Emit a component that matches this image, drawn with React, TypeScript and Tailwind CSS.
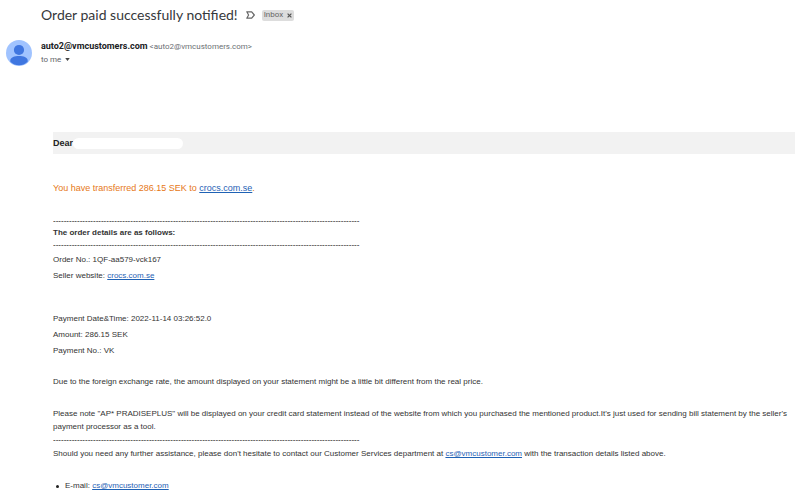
import type { ReactNode } from "react";

const DASHES = "-".repeat(115);

const PAYMENT_LINES = [
  "Payment Date&Time: 2022-11-14 03:26:52.0",
  "Amount: 286.15 SEK",
  "Payment No.: VK",
];

function MailLink({ href, children }: { href: string; children: ReactNode }) {
  return (
    <a href={href} className="text-[#1f62b5] underline">
      {children}
    </a>
  );
}

function Divider() {
  return <p className="overflow-hidden whitespace-nowrap leading-3 text-black">{DASHES}</p>;
}

function Avatar() {
  return (
    <svg viewBox="0 0 24 24" className="size-[26px] shrink-0" aria-hidden="true">
      <circle cx="12" cy="12" r="12" fill="#a0c3ff" />
      <circle cx="12" cy="9.2" r="4.7" fill="#3f76e0" />
      <path d="M4 18.9c0-2.9 4-4.1 8-4.1s8 1.2 8 4.1v1.1a11.300 11.300 0 0 1-16 0z" fill="#3f76e0" />
    </svg>
  );
}

function MessageHeader() {
  return (
    <header className="flex gap-[9px] px-[6px] pt-[15px]">
      <Avatar />
      <div>
        <p className="flex items-baseline gap-[2px] leading-[13px]">
          <span className="font-['Roboto',sans-serif] text-[9px] font-bold text-[#202124]">
            auto2@vmcustomers.com
          </span>
          <span className="font-['Roboto',sans-serif] text-[8px] text-[#6b6f74]">
            &lt;auto2@vmcustomers.com&gt;
          </span>
        </p>
        <button
          type="button"
          className="flex items-center gap-1 font-['Roboto',sans-serif] text-[8px] leading-[13px] text-[#5f6368]"
        >
          to me
          <svg viewBox="0 0 6 4" className="h-[3px] w-[5px]" aria-hidden="true">
            <path d="M0 0h6L3 4z" fill="#444" />
          </svg>
        </button>
      </div>
    </header>
  );
}

export default function App() {
  return (
    <main className="min-h-screen bg-white font-['Liberation_Sans',Arial,sans-serif] text-[8px] leading-4 text-[#333]">
      {/* Subject */}
      <div className="flex items-center pt-[5px] pl-[41px]">
        <h1 className="font-['Lato',sans-serif] text-[14px] leading-5 text-[#36383b]">
          Order paid successfully notified!
        </h1>
        <button type="button" aria-label="Mark as important" className="ml-2">
          <svg viewBox="0 0 9 8" className="h-2 w-[9px]" fill="none" stroke="#666" strokeWidth="1.2">
            <path d="M.8.8h4.900L8.300 4 5.700 7.200H.8L2.600 4z" strokeLinejoin="round" />
          </svg>
        </button>
        <span className="ml-[7px] flex h-[11px] items-center gap-1 rounded-[2px] bg-[#dddddd] px-[2px] font-['Roboto',sans-serif] text-[#666]">
          Inbox
          <button type="button" aria-label="Remove label Inbox">
            <svg viewBox="0 0 5 5" className="block size-[5px]" stroke="#555" strokeWidth="1.2">
              <path d="M.6.6l3.8 3.8M4.4.6L.6 4.4" />
            </svg>
          </button>
        </span>
      </div>

      <MessageHeader />

      {/* Body */}
      <article className="pt-[66px] pr-[5px] pl-[53px]">
        <div className="flex h-[22px] items-center bg-[#f2f2f2] text-[9px] font-bold text-[#222]">
          Dear
          <span className="h-[11px] w-[110px] rounded-full bg-white" />
        </div>

        <p className="pt-[26px] text-[9px] text-[#e67817]">
          You have transferred 286.15 SEK to <MailLink href="#crocs">crocs.com.se</MailLink>.
        </p>

        <div className="pt-[19px]">
          <Divider />
          <h2 className="font-bold leading-3">The order details are as follows:</h2>
          <Divider />
        </div>

        <div className="pt-px">
          <p>Order No.: 1QF-aa579-vck167</p>
          <p>
            Seller website: <MailLink href="#crocs">crocs.com.se</MailLink>
          </p>
        </div>

        <div className="pt-[27px]">
          {PAYMENT_LINES.map((line) => (
            <p key={line}>{line}</p>
          ))}
        </div>

        <p className="pt-[15px]">
          Due to the foreign exchange rate, the amount displayed on your statement might be a little
          bit different from the real price.
        </p>

        <p className="pt-[17px] pb-px leading-[13px]">
          Please note "AP* PRADISEPLUS" will be displayed on your credit card statement instead of
          the website from which you purchased the mentioned product.It's just used for sending bill
          statement by the seller's payment processor as a tool.
        </p>
        <Divider />
        <p>
          Should you need any further assistance, please don't hesitate to contact our Customer
          Services department at{" "}
          <MailLink href="mailto:cs@vmcustomer.com">cs@vmcustomer.com</MailLink> with the
          transaction details listed above.
        </p>

        <ul className="pt-4 pl-[3px]">
          <li className="flex items-center gap-[6px]">
            <span className="size-[3px] rounded-full bg-[#222]" />
            <span>
              E-mail: <MailLink href="mailto:cs@vmcustomer.com">cs@vmcustomer.com</MailLink>
            </span>
          </li>
        </ul>
      </article>
    </main>
  );
}
